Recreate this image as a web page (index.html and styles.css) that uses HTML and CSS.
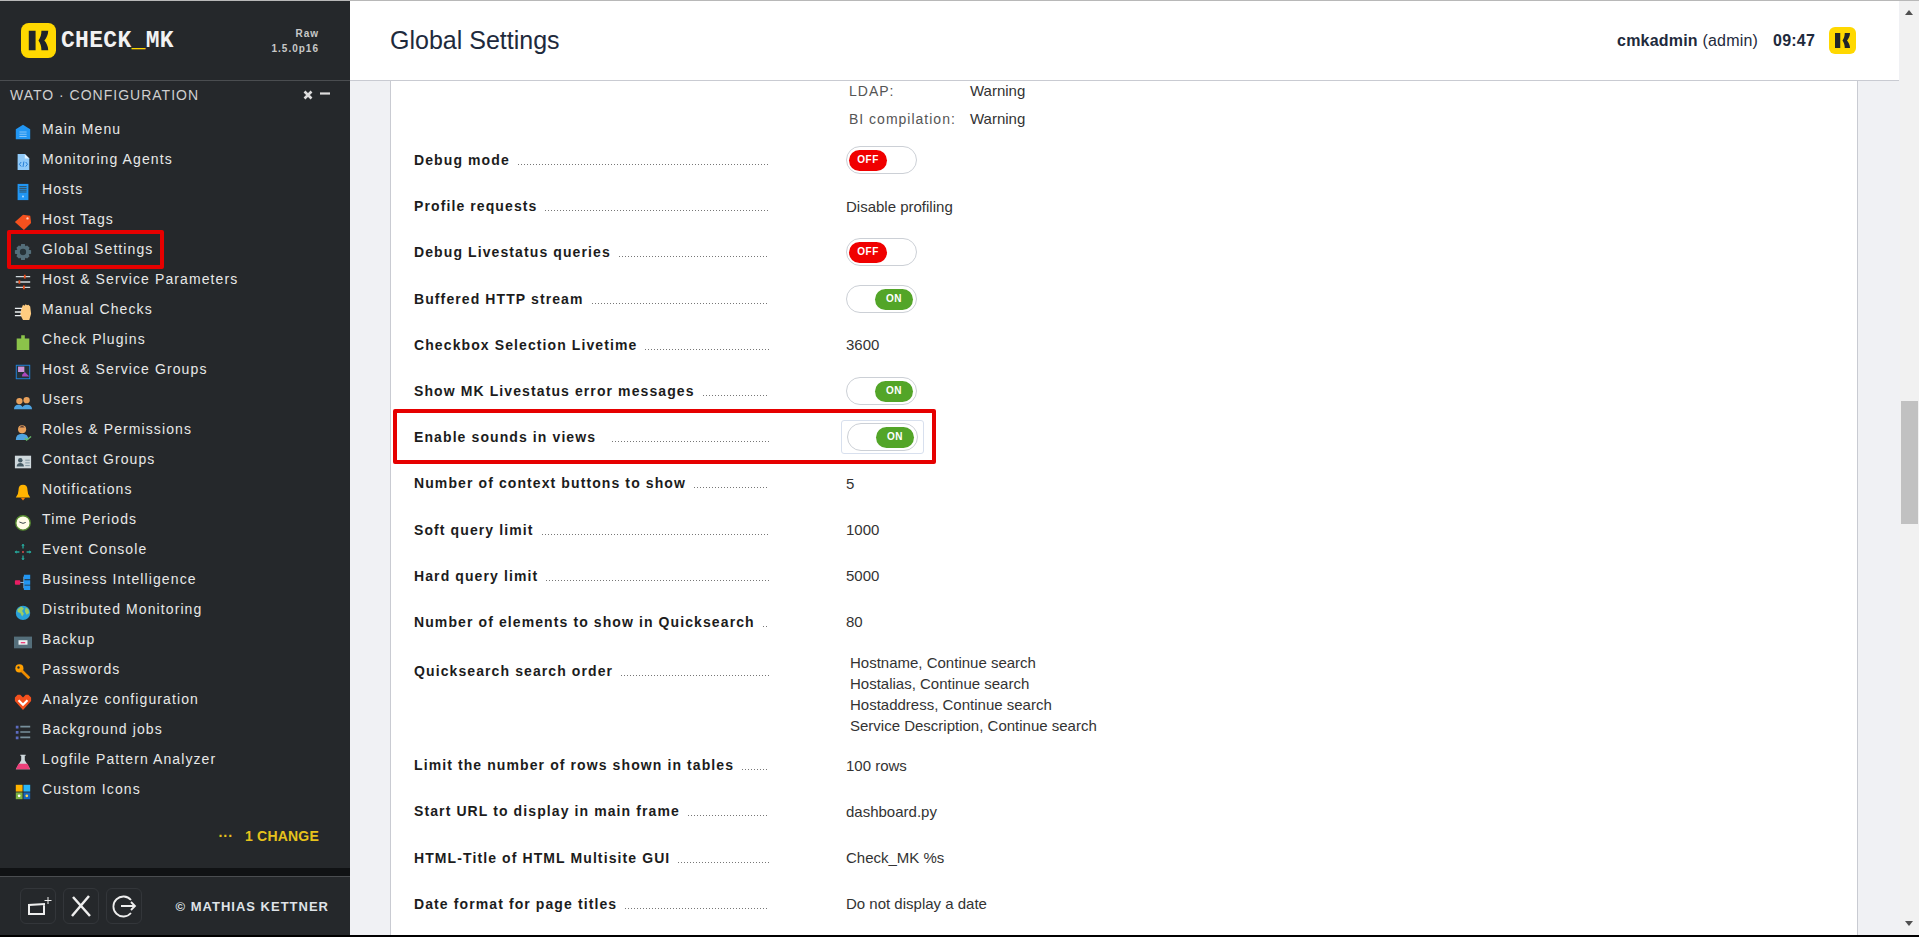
FILE: index.html
```html
<!DOCTYPE html>
<html lang="en">
<head>
    <meta charset="UTF-8" />
    <title>Global Settings</title>
    <link rel="stylesheet" href="styles.css">
</head>
<body>
    <aside class="sidebar">
        <div class="brand">
            <svg class="logo" viewBox="0 0 36 36"><rect width="36" height="36" rx="8" fill="#ffd800"/><path d="M8 8h7v20H8zM18 18c2-3 3-6 3-10h7c0 4-2 8-4 10 2 2 4 6 4 10h-7c0-4-1-7-3-10z" fill="#20242a"/></svg>
            <span class="brand-name">CHECK<span class="brand-bar">_</span>MK</span>
            <div class="version">Raw<br>1.5.0p16</div>
        </div>
        <div class="snapin-title">
            <span>WATO · CONFIGURATION</span>
            <span class="snapin-ctl">
                <svg viewBox="0 0 10 10" width="10" height="10"><path d="M1.5 1.5l7 7M8.5 1.5l-7 7" stroke="#ddd" stroke-width="2.6"/></svg>
                <svg viewBox="0 0 10 10" width="10" height="10"><path d="M0 3.5h10" stroke="#ddd" stroke-width="2.2"/></svg>
            </span>
        </div>
        <ul class="menu">
            <li><svg viewBox="0 0 20 20"><path d="M2 7l8-5 8 5v11H2z" fill="#2196f3"/><path d="M6 10h8M6 12.500h8M6 15h8" stroke="#90caf9"/></svg>Main Menu</li>
            <li><svg viewBox="0 0 20 20"><path d="M4 1h8l5 5v13H4z" fill="#90caf9"/><path d="M12 1l5 5h-5z" fill="#e3f2fd"/><path d="M8 10l-2 2.500L8 15M13 10l2 2.500-2 2.500M11 9.500L10 15.500" stroke="#1976d2" fill="none"/></svg>Monitoring Agents</li>
            <li><svg viewBox="0 0 20 20"><rect x="4" y="1" width="12" height="18" fill="#2196f3"/><path d="M6 4h8M6 6h8M6 8h8M6 10h8" stroke="#37474f"/><circle cx="10" cy="15" r="1" fill="#bbdefb"/></svg>Hosts</li>
            <li><svg viewBox="0 0 20 20"><path d="M1 10L10 2l8 1 1 8-8 8z" fill="#f4511e"/><circle cx="15" cy="6" r="1.300" fill="#ffccbc"/></svg>Host Tags</li>
            <li class="marked"><svg viewBox="0 0 20 20"><path d="M8 1h4l.6 2.600 2-.9 2.700 2.700-1 2 2.700.6v4l-2.700.6 1 2-2.700 2.700-2-1L12 19H8l-.6-2.700-2 1-2.700-2.700 1-2L1 12V8l2.700-.6-1-2 2.700-2.700 2 .9z" fill="#546e7a"/><circle cx="10" cy="10" r="3.500" fill="#263238"/></svg>Global Settings</li>
            <li><svg viewBox="0 0 20 20"><path d="M2 4h16M2 10h16M2 16h16" stroke="#cfd8dc" stroke-width="1.500"/><path d="M12 2v4M6 8v4M11 14v4" stroke="#e64a19" stroke-width="2"/></svg>Host &amp; Service Parameters</li>
            <li><svg viewBox="0 0 20 20"><path d="M8 7l2-5 1.500 1 1.500-1.500 1.500 1L16 2l2 2 1 8-2 7H10l-3-6z" fill="#ffcc80"/><path d="M1 6h8M1 10h7M1 14h7" stroke="#eceff1" stroke-width="1.500"/></svg>Manual Checks</li>
            <li><svg viewBox="0 0 20 20"><path d="M3 6h5V2.500h4V6h5v13H3z" fill="#8bc34a"/></svg>Check Plugins</li>
            <li><svg viewBox="0 0 20 20"><rect x="2.500" y="2.500" width="15" height="15" fill="#263238" stroke="#1e88e5"/><rect x="4.500" y="4" width="7" height="6" fill="#ce93d8"/><path d="M9 13l3-3 5 5H9z" fill="#ab47bc"/></svg>Host &amp; Service Groups</li>
            <li><svg viewBox="0 0 20 20"><path d="M0 18q0-5 5-5t5 5zM9 18q0-5 5.500-5t5.500 5z" fill="#4fa3e0"/><circle cx="6" cy="9" r="3.500" fill="#e8a15c"/><circle cx="14" cy="8" r="3.500" fill="#e8a15c"/></svg>Users</li>
            <li><svg viewBox="0 0 20 20"><path d="M2 19q0-7 7-7t7 7z" fill="#4fa3e0"/><circle cx="9" cy="7" r="4.500" fill="#e8a15c"/><path d="M6 5q3-4 6 0z" fill="#5d4037"/><path d="M12 17l2 2 5-4" stroke="#66bb6a" stroke-width="1.500" fill="none"/></svg>Roles &amp; Permissions</li>
            <li><svg viewBox="0 0 20 20"><rect x="1" y="3" width="18" height="14" fill="#cfd8dc"/><circle cx="7" cy="8" r="2.500" fill="#455a64"/><path d="M3 15q0-4 4-4t4 4z" fill="#455a64"/><path d="M12.500 8h5M12.500 11h5M12.500 14h5" stroke="#78909c"/></svg>Contact Groups</li>
            <li><svg viewBox="0 0 20 20"><path d="M10 2q5 0 5 6 0 5 3 8H2q3-3 3-8 0-6 5-6z" fill="#ffb300"/><path d="M7.500 16.500h5L10 19.500z" fill="#f57c00"/></svg>Notifications</li>
            <li><svg viewBox="0 0 20 20"><circle cx="10" cy="11" r="8" fill="#fffde7" stroke="#558b2f" stroke-width="1.500"/><path d="M6 10l4 1.500 3-1" stroke="#263238" fill="none"/></svg>Time Periods</li>
            <li><svg viewBox="0 0 20 20"><path d="M10 1v5M10 14v5M1 10h5M14 10h5" stroke="#26a69a" stroke-width="1.500"/><path d="M8 3h4l-2-2zM8 17h4l-2 2zM3 8v4l-2-2zM17 8v4l2-2z" fill="#26a69a"/><circle cx="10" cy="10" r="1" fill="#ef5350"/></svg>Event Console</li>
            <li><svg viewBox="0 0 20 20"><rect x="1" y="8" width="6" height="5" rx="1" fill="#e91e63"/><path d="M7 10.500h4M11 4v13" stroke="#90caf9"/><path d="M11 2h7v5h-7zM11 8h7v5h-7zM11 14h7v5h-7z" fill="#2196f3"/></svg>Business Intelligence</li>
            <li><svg viewBox="0 0 20 20"><circle cx="10" cy="11" r="8" fill="#29a0d8"/><path d="M4 7l4-3 3 2-2 3 2 3-2 3-2-4-3-1zM13 5l3 2 1 4-3 2-2-4z" fill="#9ccc65"/></svg>Distributed Monitoring</li>
            <li><svg viewBox="0 0 20 20"><rect x="0" y="4" width="20" height="13" fill="#546e7a"/><rect x="5" y="8" width="10" height="5" fill="#eceff1"/><rect x="7.500" y="10" width="5" height="1.500" fill="#ec407a"/></svg>Backup</li>
            <li><svg viewBox="0 0 20 20"><circle cx="6" cy="6" r="4.500" fill="#ffa000"/><path d="M8 8l9 9" stroke="#ef8c00" stroke-width="3"/><circle cx="5" cy="5" r="1.300" fill="#263238"/></svg>Passwords</li>
            <li><svg viewBox="0 0 20 20"><path d="M10 19L1 9V5l3-3h3l3 3 3-3h3l3 3v4z" fill="#f4511e"/><path d="M5 8l5 5 5-5" stroke="#fff" stroke-width="2.400" fill="none"/></svg>Analyze configuration</li>
            <li><svg viewBox="0 0 20 20"><path d="M7 4h11M7 10h11M7 16h11" stroke="#78909c" stroke-width="1.800"/><path d="M2 3h3v3H2zM2 9h3v3H2zM2 15h3v3H2z" fill="#5c6bc0"/></svg>Background jobs</li>
            <li><svg viewBox="0 0 20 20"><path d="M7 2h6v1h-1v5l6 10H2L8 8V3H7z" fill="#cfd8dc"/><path d="M5 12h10l3 6H2z" fill="#ec407a"/></svg>Logfile Pattern Analyzer</li>
            <li><svg viewBox="0 0 20 20"><rect x="2" y="2" width="7.500" height="7.500" fill="#ffb300"/><rect x="10.500" y="2" width="7.500" height="7.500" fill="#29b6f6"/><rect x="2" y="10.500" width="7.500" height="7.500" fill="#7cb342"/><rect x="10.500" y="10.500" width="7.500" height="7.500" fill="#1565c0"/><circle cx="5.700" cy="14.200" r="1.500" fill="#fff"/><circle cx="14.200" cy="14.200" r="1.500" fill="#ffd54f"/></svg>Custom Icons</li>
        </ul>
        <div class="changes"><span class="change-dots">···</span>1 CHANGE</div>
        <div class="foot-band"></div>
        <div class="foot">
            <div class="foot-btn"><svg viewBox="0 0 28 28" width="28" height="28"><path d="M21 12l-16 1v9h15v-9" stroke="#eee" stroke-width="2" fill="none"/><path d="M24 5v7M20.500 8.500h7" stroke="#eee"/></svg></div>
            <div class="foot-btn"><svg viewBox="0 0 28 28" width="28" height="28"><path d="M6 5l17 19M22 4L5 24" stroke="#eee" stroke-width="2.500" fill="none"/></svg></div>
            <div class="foot-btn"><svg viewBox="0 0 28 28" width="28" height="28"><path d="M21 8a10 10 0 1 0 0 13M11 14h14M21 10l4 4-4 4" stroke="#eee" stroke-width="1.800" fill="none"/></svg></div>
            <div class="copyright">© MATHIAS KETTNER</div>
        </div>
    </aside>

    <main class="main">
        <header class="topbar">
            <h1>Global Settings</h1>
            <div class="user"><b>cmkadmin</b> (admin)<b class="clock">09:47</b></div>
            <svg class="logo-small" viewBox="0 0 36 36"><rect width="36" height="36" rx="8" fill="#ffd800"/><path d="M8 8h7v20H8zM18 18c2-3 3-6 3-10h7c0 4-2 8-4 10 2 2 4 6 4 10h-7c0-4-1-7-3-10z" fill="#20242a"/></svg>
        </header>
        <div class="content">
            <section class="panel">
                <div class="row row-sub">
                    <div class="label"></div>
                    <div class="value sublist">
                        <div><span class="sub-key">LDAP:</span>Warning</div>
                        <div><span class="sub-key">BI compilation:</span>Warning</div>
                    </div>
                </div>
                <div class="row"><div class="label"><span>Debug mode</span></div><div class="value"><div class="toggle off"><span>OFF</span></div></div></div>
                <div class="row"><div class="label"><span>Profile requests</span></div><div class="value">Disable profiling</div></div>
                <div class="row"><div class="label"><span>Debug Livestatus queries</span></div><div class="value"><div class="toggle off"><span>OFF</span></div></div></div>
                <div class="row"><div class="label"><span>Buffered HTTP stream</span></div><div class="value"><div class="toggle on"><span>ON</span></div></div></div>
                <div class="row"><div class="label"><span>Checkbox Selection Livetime</span></div><div class="value">3600</div></div>
                <div class="row"><div class="label"><span>Show MK Livestatus error messages</span></div><div class="value"><div class="toggle on"><span>ON</span></div></div></div>
                <div class="row row-marked"><div class="label"><span>Enable sounds in views</span></div><div class="value"><div class="focus-ring"><div class="toggle on"><span>ON</span></div></div></div></div>
                <div class="row"><div class="label"><span>Number of context buttons to show</span></div><div class="value">5</div></div>
                <div class="row"><div class="label"><span>Soft query limit</span></div><div class="value">1000</div></div>
                <div class="row"><div class="label"><span>Hard query limit</span></div><div class="value">5000</div></div>
                <div class="row"><div class="label"><span>Number of elements to show in Quicksearch</span></div><div class="value">80</div></div>
                <div class="row row-order">
                    <div class="label"><span>Quicksearch search order</span></div>
                    <div class="value order">
                        <div>Hostname, Continue search</div>
                        <div>Hostalias, Continue search</div>
                        <div>Hostaddress, Continue search</div>
                        <div>Service Description, Continue search</div>
                    </div>
                </div>
                <div class="row"><div class="label"><span>Limit the number of rows shown in tables</span></div><div class="value">100 rows</div></div>
                <div class="row"><div class="label"><span>Start URL to display in main frame</span></div><div class="value">dashboard.py</div></div>
                <div class="row"><div class="label"><span>HTML-Title of HTML Multisite GUI</span></div><div class="value">Check_MK %s</div></div>
                <div class="row"><div class="label"><span>Date format for page titles</span></div><div class="value">Do not display a date</div></div>
            </section>
        </div>
    </main>

    <div class="scrollbar">
        <div class="arrow-up"></div>
        <div class="thumb"></div>
        <div class="arrow-down"></div>
    </div>
</body>
</html>
```

FILE: styles.css
```css
*, *::after {
    box-sizing: border-box;
}

html, body {
    height: 100%;
}

body {
    margin: 0;
    display: flex;
    overflow: hidden;
    font-family: "Liberation Sans", Arial, sans-serif;
    background-color: #f0f1f4;
    border-top: 1px solid #b8b8b8;
    border-bottom: 2px solid #000;
}

/* sidebar */
.sidebar {
    width: 350px;
    flex: none;
    display: flex;
    flex-direction: column;
    background-color: #25282b;
    color: #e8e8e8;
}

.brand {
    height: 80px;
    flex: none;
    display: flex;
    align-items: center;
    padding: 0 31px 0 21px;
    border-bottom: 1px solid #4a4d50;
}

.logo {
    width: 35px;
    height: 35px;
    flex: none;
}

.brand-name {
    margin-left: 5px;
    font-family: "Liberation Mono", monospace;
    font-weight: bold;
    font-size: 23px;
    letter-spacing: 0.300px;
    color: #f2f2f2;
}

.brand-bar {
    color: #ffd800;
}

.version {
    margin-left: auto;
    text-align: right;
    font-size: 10px;
    line-height: 15px;
    font-weight: bold;
    letter-spacing: 1px;
    color: #c8c8c8;
}

.snapin-title {
    height: 27px;
    flex: none;
    display: flex;
    align-items: center;
    justify-content: space-between;
    padding: 0 20px 0 10px;
    font-size: 14px;
    letter-spacing: 1px;
    color: #cfcfcf;
}

.snapin-ctl {
    display: flex;
    gap: 7px;
}

.menu {
    list-style: none;
    margin: 6px 0 0;
    padding: 0;
    flex: 1;
}

.menu li {
    position: relative;
    height: 30px;
    display: flex;
    align-items: center;
    padding-left: 14px;
    font-size: 14px;
    letter-spacing: 1.100px;
}

.menu svg {
    width: 18px;
    height: 18px;
    flex: none;
    margin: 5px 10px 0 0;
}

.menu .marked::after {
    content: "";
    position: absolute;
    left: 7px;
    top: -4px;
    width: 157px;
    height: 39px;
    border: 4px solid #e60000;
    border-radius: 2px;
}

.changes {
    flex: none;
    height: 40px;
    padding-right: 31px;
    text-align: right;
    font-size: 14px;
    font-weight: bold;
    letter-spacing: 0.200px;
    color: #e6c21c;
}

.change-dots {
    margin-right: 12px;
}

.foot-band {
    height: 9px;
    flex: none;
    background-color: #101214;
    border-bottom: 1px solid #4a4d50;
}

.foot {
    height: 58px;
    flex: none;
    display: flex;
    align-items: center;
    gap: 7px;
    padding: 0 21px 0 20px;
}

.foot-btn {
    width: 36px;
    height: 36px;
    display: flex;
    align-items: center;
    justify-content: center;
    border: 1px solid #33363a;
    border-radius: 6px;
}

.copyright {
    margin-left: auto;
    font-size: 13px;
    font-weight: bold;
    letter-spacing: 1px;
    color: #dfe3e8;
}

/* main area */
.main {
    flex: 1;
    min-width: 0;
    display: flex;
    flex-direction: column;
    margin-right: 20px;
}

.topbar {
    height: 80px;
    flex: none;
    display: flex;
    align-items: center;
    padding: 0 43px 0 40px;
    background-color: #fff;
    border-bottom: 1px solid #c9cbd2;
    color: #1e2a3c;
}

.topbar h1 {
    margin: 0 auto 0 0;
    font-size: 25px;
    font-weight: normal;
}

.user {
    font-size: 16px;
    letter-spacing: 0.200px;
}

.clock {
    margin-left: 15px;
}

.logo-small {
    width: 27px;
    height: 27px;
    margin-left: 14px;
}

.content {
    flex: 1;
    overflow: hidden;
    padding: 0 41px 0 40px;
}

.panel {
    height: 100%;
    overflow: hidden;
    padding: 0 23px;
    background-color: #fff;
    border-left: 1px solid #c9cbd2;
    border-right: 1px solid #c9cbd2;
}

/* settings rows */
.row {
    height: 46.200px;
    display: flex;
    align-items: center;
    position: relative;
    font-size: 15px;
    color: #333;
}

.row-sub {
    height: 56px;
    align-items: flex-start;
}

.row-order {
    height: 97px;
}

.row-order .label {
    align-self: flex-start;
    margin-top: 18px;
}

.label {
    width: 355px;
    flex: none;
    display: flex;
    align-items: baseline;
    font-size: 14px;
    font-weight: bold;
    letter-spacing: 1.100px;
    color: #1c1c1c;
}

.label span {
    flex: none;
    margin-right: 8px;
}

/* dot leader up to the value column */
.label::after {
    content: "";
    flex: 1;
    height: 1px;
    background-image: linear-gradient(to right, #777 1px, transparent 1px);
    background-size: 3px 1px;
}

.row-sub .label::after {
    display: none;
}

.row-marked .label span {
    margin-right: 16px;
}

.value {
    margin-left: 77px;
}

.sublist {
    margin: -4px 0 0 80px;
    line-height: 27px;
}

.sub-key {
    display: inline-block;
    width: 121px;
    font-size: 14px;
    letter-spacing: 1px;
    color: #555;
}

.order {
    margin-left: 81px;
    line-height: 21px;
}

.toggle {
    position: relative;
    width: 71px;
    height: 28px;
    background-color: #fff;
    border: 1px solid #ccd0d6;
    border-radius: 14px;
}

.toggle span {
    position: absolute;
    top: 3px;
    width: 38px;
    height: 21px;
    border-radius: 11px;
    font-size: 10px;
    line-height: 20px;
    font-weight: bold;
    letter-spacing: 0.500px;
    text-align: center;
    color: #fff;
}

.toggle.off span {
    left: 2px;
    background-color: #f00000;
}

.toggle.on span {
    right: 3px;
    background-color: #53a528;
}

.focus-ring {
    margin-left: -5px;
    width: 83px;
    height: 34px;
    display: flex;
    align-items: center;
    justify-content: center;
    border: 1px solid #d8e0ee;
    border-radius: 3px;
}

.row-marked::after {
    content: "";
    position: absolute;
    left: -21px;
    top: -5px;
    width: 543px;
    height: 55px;
    border: 4px solid #e60000;
    border-radius: 2px;
}

/* scrollbar drawn over the right edge */
.scrollbar {
    position: fixed;
    top: 1px;
    right: 0;
    bottom: 2px;
    width: 19px;
    background-color: #f1f1f1;
}

.arrow-up {
    position: absolute;
    top: 9px;
    left: 5px;
    width: 0;
    height: 0;
    border-left: 4.500px solid transparent;
    border-right: 4.500px solid transparent;
    border-bottom: 5px solid #505050;
}

.arrow-down {
    position: absolute;
    bottom: 9px;
    left: 5px;
    width: 0;
    height: 0;
    border-left: 4.500px solid transparent;
    border-right: 4.500px solid transparent;
    border-top: 5px solid #505050;
}

.thumb {
    position: absolute;
    top: 400px;
    left: 1px;
    width: 17px;
    height: 123px;
    background-color: #c1c1c1;
}
```
